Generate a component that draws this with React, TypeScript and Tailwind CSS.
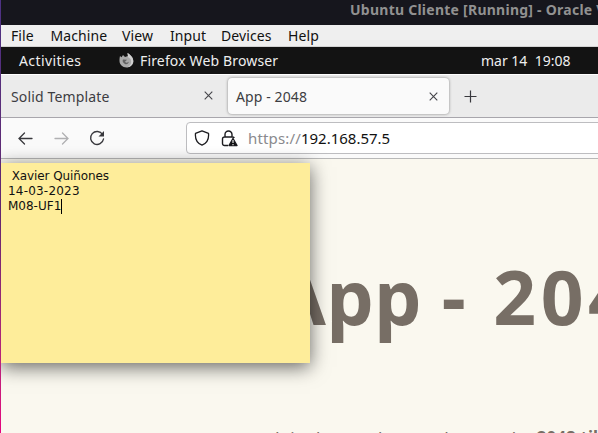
import type { ReactNode } from "react";

function Close() {
  return (
    <svg className="size-[9px] shrink-0" viewBox="0 0 9 9" fill="none" stroke="#45454a" strokeWidth="1.1">
      <path d="M.7.7l7.6 7.6M8.3.7L.7 8.3" />
    </svg>
  );
}

function Menu({ w, children }: { w: string; children: ReactNode }) {
  return <span className={`${w} shrink-0 whitespace-nowrap`}>{children}</span>;
}

function TitleAndMenus() {
  return (
    <>
      <div className="h-[25px] shrink-0 overflow-hidden whitespace-nowrap bg-[#16161d] pl-[349px] text-[14px] font-bold leading-[20px] tracking-[0.25px] text-[#919191]">
        Ubuntu Cliente [Running] - Oracle VM VirtualBox
      </div>
      <div className="flex h-[22px] shrink-0 border-b border-[#d2d2d2] bg-[#efefef] pl-[10px] text-[14px] leading-[22px] tracking-[0.1px] text-[#111]">
        <Menu w="w-[39.500px]">File</Menu>
        <Menu w="w-[71.500px]">Machine</Menu>
        <Menu w="w-[48px]">View</Menu>
        <Menu w="w-[51px]">Input</Menu>
        <Menu w="w-[67px]">Devices</Menu>
        <Menu w="w-[40px]">Help</Menu>
      </div>
    </>
  );
}

function TopBar() {
  return (
    <div className="flex h-[27px] shrink-0 items-center whitespace-nowrap bg-[#131313] pl-[18px] text-[14px] leading-[26px] text-[#eee]">
      <span className="w-[100px] shrink-0 tracking-[0.4px]">Activities</span>
      <svg className="mr-[6px] size-[15px] shrink-0" viewBox="0 0 15 15">
        <path d="M1 3l1.5 1.2L4 2l2 2 3-1-.5-3C12 2 14.5 5 14.3 8.500 14 12 11 14.500 7.500 14.500 3.500 14.500.5 11.500.5 8 .5 6 .7 4 1 3z" fill="#aaa" />
        <path d="M4 6.500l4 .2-2 2c1 1.500 3 1 4-.2-.5 2-2 3.200-4 2.500C4 10 3 8 4 6.500z" fill="#626262" />
        <path d="M8.500 0C12 2 14.500 5 14.300 8.500 14 12 11 14 9 14c3-2 4-5 2.500-8L9 4z" fill="#d0d0d0" />
      </svg>
      <span className="w-[341px] shrink-0 tracking-[0.15px]">Firefox Web Browser</span>
      <span className="whitespace-pre">mar 14  19:08</span>
    </div>
  );
}

function Tabs() {
  return (
    <div className="flex h-[44px] shrink-0 border-b border-t border-b-[#a8a6ac] border-t-white bg-[#ebebeb] pt-[2px] text-[14px] text-[#3d3d42]">
      <div className="flex h-[37px] w-[227px] items-center justify-between pl-[10px] pr-[15.500px]">
        <span className="pt-[2px] tracking-[0.15px]">Solid Template</span>
        <Close />
      </div>
      <div className="mt-px flex h-[36px] w-[221px] items-center justify-between rounded-[4px] bg-[#fafafa] pl-[8px] pr-[11.500px] shadow-[0_0_3px_rgba(0,0,0,0.45)]">
        <span className="pt-px tracking-[0.1px]">App - 2048</span>
        <Close />
      </div>
      <svg className="ml-[15px] mt-[13px] size-[13px]" viewBox="0 0 13 13" stroke="#38383d" strokeWidth="1.200">
        <path d="M6.500.5v12M.5 6.500h12" />
      </svg>
    </div>
  );
}

function Toolbar() {
  return (
    <div className="flex h-[41px] shrink-0 items-center border-b border-[#b8b8b8] bg-[#fafafa] pl-[17px]">
      <svg className="size-[15px] shrink-0" viewBox="0 0 15 15" fill="none" stroke="#38383d" strokeWidth="1.300" strokeLinecap="round">
        <path d="M14 7.500H1M6.500 2L1 7.500 6.500 13" />
      </svg>
      <svg className="ml-[21px] size-[15px] shrink-0" viewBox="0 0 15 15" fill="none" stroke="#b0b0b2" strokeWidth="1.300" strokeLinecap="round">
        <path d="M1 7.500h13M8.500 2L14 7.500 8.500 13" />
      </svg>
      <svg className="ml-[20px] size-[16px] shrink-0" viewBox="0 0 16 16" fill="none" stroke="#38383d" strokeWidth="1.400">
        <path d="M13.600 4.500A6.500 6.500 0 1 0 14.500 9" strokeLinecap="round" />
        <path d="M15 1v5.500H9.500z" fill="#38383d" stroke="none" />
      </svg>
      <div className="ml-[81px] flex h-[32px] w-[430px] shrink-0 items-center rounded-[4px] border border-[#bdbdc0] bg-white pl-[7px] text-[15px]">
        <svg className="size-[16px] shrink-0" viewBox="0 0 16 16" fill="none" stroke="#1c1c20" strokeWidth="1.300" strokeLinejoin="round">
          <path d="M8 .8l6.500 2.600c.5 5-1.500 9.800-6.500 11.800-5-2-7-6.800-6.500-11.800z" />
        </svg>
        <svg className="ml-[11px] size-[17px] shrink-0" viewBox="0 0 17 17" fill="none" stroke="#1c1c20" strokeWidth="1.400">
          <path d="M4 7V4.500a3.500 3.500 0 0 1 7 0V7M7 15.500H3.500a2 2 0 0 1-2-2V9a2 2 0 0 1 2-2h8a2 2 0 0 1 1.800 1" />
          <path d="M12 8.500l4 7H8z" fill="#111" strokeLinejoin="round" />
          <path d="M12 10v3M12 14v1.200" stroke="white" strokeWidth="1.100" />
        </svg>
        <span className="ml-[10px] tracking-[0.15px] text-[#8a8a8e]">https://</span>
        <span className="text-[#111]">192.168.57.5</span>
      </div>
    </div>
  );
}

function Note() {
  return (
    <div className="absolute left-0 top-[163px] h-[200px] w-[309px] whitespace-pre bg-[#feed9a] pl-[7px] pt-[6px] font-['DejaVu_Sans'] text-[12px] leading-[15px] text-[#111] shadow-[0_4px_18px_rgba(0,0,0,0.6)]">
      <div className="tracking-[-0.1px]"> Xavier Quiñones</div>
      <div className="tracking-[0.2px]">14-03-2023</div>
      <div className="flex">M08-UF1<i className="h-[15px] w-px bg-black" /></div>
    </div>
  );
}

export default function App() {
  return (
    <div className="h-[433px] w-[598px] overflow-hidden bg-gradient-to-b from-[#4d3284] via-[#64266f] to-[#e6007e] pl-px font-['Noto_Sans',sans-serif]">
      <div className="relative flex h-full w-full flex-col overflow-hidden bg-[#faf8ef]">
        <TitleAndMenus />
        <TopBar />
        <Tabs />
        <Toolbar />
        <main className="flex-1 overflow-hidden whitespace-nowrap text-[#776e65]">
          <h1 className="ml-[273px] mt-[92px] text-[75px] font-bold leading-[90px]">
            <span className="tracking-[0.5px]">App</span> -{" "}
            <span className="ml-[8px] tracking-[4.5px]">2048</span>
          </h1>
          <p className="ml-[274px] mt-[84px] text-[17px] leading-[26px] tracking-[0.1px]">
            Join the numbers and get to the <b>2048 tile!</b>
          </p>
        </main>
        <Note />
      </div>
    </div>
  );
}
